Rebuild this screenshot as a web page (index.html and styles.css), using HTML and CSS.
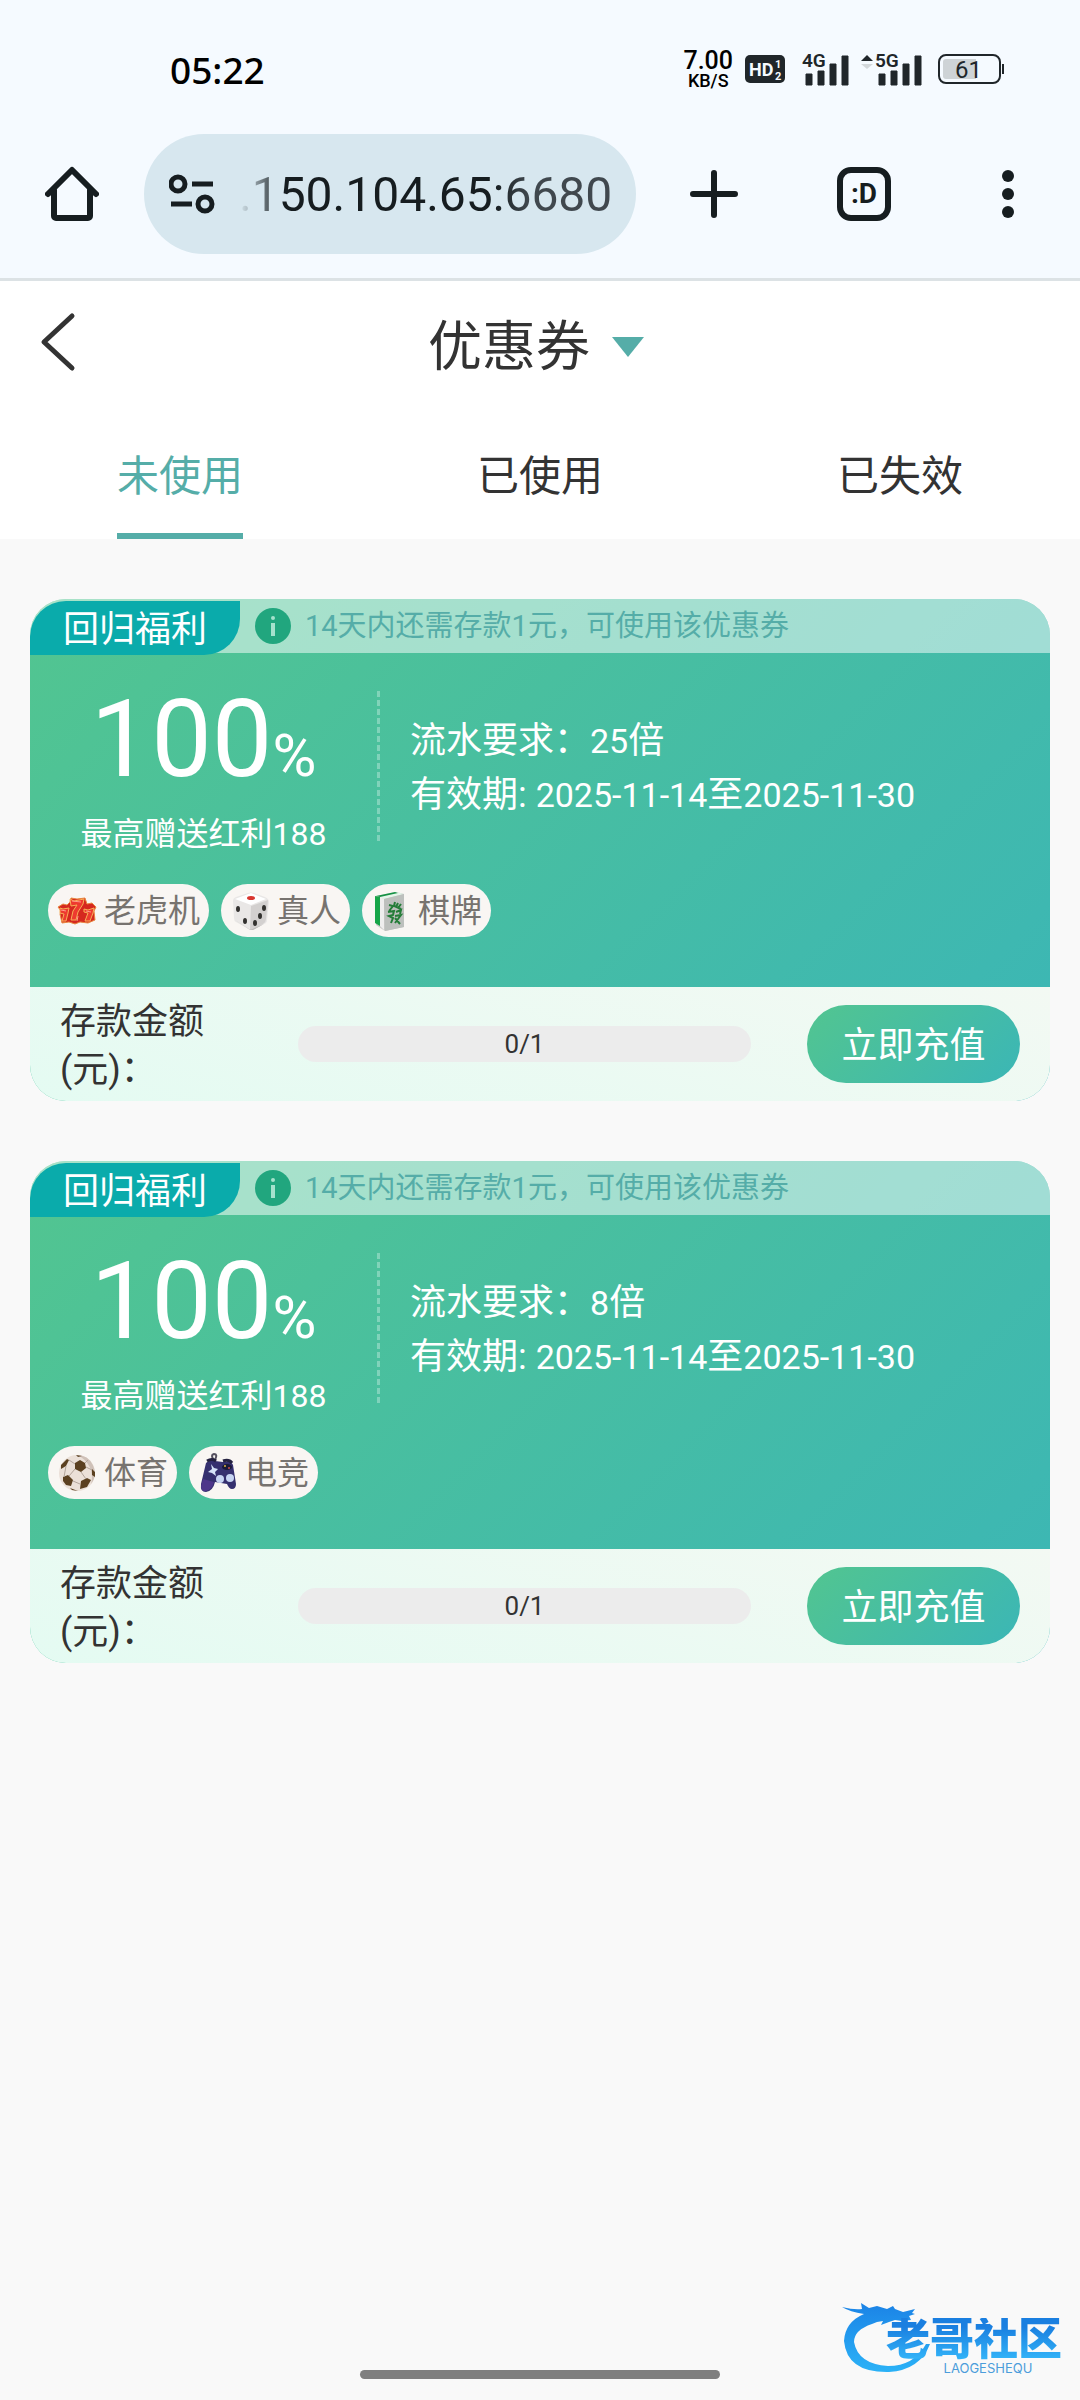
FILE: index.html
```html
<!DOCTYPE html>
<html lang="zh-CN">

<head>
    <meta charset="UTF-8">
    <meta name="viewport" content="width=device-width, initial-scale=1.0">
    <title>优惠券</title>
    <link rel="stylesheet" href="styles.css">
</head>

<body>
    <header class="browser">
        <div class="status_bar">
            <span class="status_time">05:22</span>
            <div class="status_icons">
                <div class="net_speed"><b>7.00</b><span>KB/S</span></div>
                <svg class="hd_icon" width="40" height="28" viewBox="0 0 40 28">
                    <rect width="40" height="28" rx="5" fill="#20262a" />
                    <text x="4" y="21" font-size="18" font-weight="700" fill="#f5faff">HD</text>
                    <text x="30" y="13" font-size="11" font-weight="700" fill="#f5faff">1</text>
                    <text x="30" y="25" font-size="11" font-weight="700" fill="#f5faff">2</text>
                </svg>
                <svg class="signal_4g" width="47" height="42" viewBox="0 -4 47 42">
                    <text x="0" y="15" font-size="19" font-weight="600">4G</text>
                    <path d="M4 22h6v11H4zM16 19h6v14h-6zM28 12h6v21h-6zM40 4h6v29h-6z" stroke="#20262a" stroke-linejoin="round" />
                </svg>
                <svg class="signal_5g" width="61" height="42" viewBox="0 -4 61 42">
                    <path d="M0 9l6-6 6 6z" />
                    <path d="M0 12l6 5 6-5z" fill="#d3d8db" />
                    <text x="14" y="15" font-size="19" font-weight="600">5G</text>
                    <path d="M18 22h6v11h-6zM30 19h6v14h-6zM42 12h6v21h-6zM54 4h6v29h-6z" stroke="#20262a" stroke-linejoin="round" />
                </svg>
                <svg width="67" height="30" viewBox="0 0 67 30">
                    <rect x="1" y="1" width="61" height="28" rx="7" fill="none" stroke="#20262a" stroke-width="2" />
                    <path d="M8 5h30v20H8a3 3 0 0 1-3-3V8a3 3 0 0 1 3-3z" fill="#ced3d6" />
                    <path d="M64 10h2v10h-2z" />
                    <text x="17" y="24" font-size="24">61</text>
                </svg>
            </div>
        </div>
        <div class="toolbar">
            <button class="tool tool_home" aria-label="主页">
                <svg width="54" height="56" viewBox="0 0 54 56" fill="none" stroke="#161d20" stroke-width="6" stroke-linejoin="round" stroke-linecap="round">
                    <path d="M3 28L27 4l24 24M9 24v26a2 2 0 0 0 2 2h32a2 2 0 0 0 2-2V24" />
                </svg>
            </button>
            <div class="url_box">
                <svg width="46" height="40" viewBox="0 0 46 40" fill="none" stroke="#161d20" stroke-width="5">
                    <circle cx="9" cy="10" r="7" />
                    <path d="M23 10h21M2 30h21" />
                    <circle cx="36" cy="30" r="7" />
                </svg>
                <input class="url_input" type="text" value=".150.104.65:6680" aria-label="网址">
            </div>
            <button class="tool tool_add" aria-label="新标签页">
                <svg width="48" height="48" viewBox="0 0 48 48" fill="none" stroke="#161d20" stroke-width="6" stroke-linecap="round">
                    <path d="M24 3v42M3 24h42" />
                </svg>
            </button>
            <button class="tool tool_tabs" aria-label="标签页"><span class="tab_count">:D</span></button>
            <button class="tool tool_menu" aria-label="菜单">
                <svg width="12" height="50" viewBox="0 0 12 50" fill="#161d20">
                    <circle cx="6" cy="7" r="6" />
                    <circle cx="6" cy="25" r="6" />
                    <circle cx="6" cy="43" r="6" />
                </svg>
            </button>
        </div>
    </header>

    <nav class="page_head">
        <div class="title_bar">
            <a class="back" href="#" aria-label="返回">
                <svg width="36" height="60" viewBox="0 0 36 60" fill="none" stroke="#333" stroke-width="5" stroke-linecap="round" stroke-linejoin="round">
                    <path d="M32 4L4 30l28 26" />
                </svg>
            </a>
            <button class="title">优惠券<i class="arrow_down"></i></button>
        </div>
        <div class="tabs">
            <a class="tab active" href="#"><span>未使用</span></a>
            <a class="tab" href="#"><span>已使用</span></a>
            <a class="tab" href="#"><span>已失效</span></a>
        </div>
    </nav>

    <main class="coupon_list">
        <section class="coupon">
            <div class="coupon_tip">
                <span class="badge">回归福利</span>
                <svg class="info" width="36" height="36" viewBox="0 0 36 36">
                    <circle cx="18" cy="18" r="18" fill="#21a67e" />
                    <circle cx="18" cy="10" r="2" fill="#a5e2cd" />
                    <path d="M18 15v13" stroke="#a5e2cd" stroke-width="4" />
                </svg>
                <span>14天内还需存款1元，可使用该优惠券</span>
            </div>
            <div class="coupon_body">
                <div class="coupon_main">
                    <div class="amount">
                        <div class="percent">100<small>%</small></div>
                        <div class="max_bonus">最高赠送红利188</div>
                    </div>
                    <div class="divider"></div>
                    <div class="rules">
                        <div>流水要求：<span class="num">25</span>倍</div>
                        <div>有效期: <span class="num">2025-11-14</span>至<span class="num">2025-11-30</span></div>
                    </div>
                </div>
                <div class="tags">
                    <span class="tag">
                        <svg width="40" height="40" viewBox="0 0 40 40" stroke-linejoin="round">
                            <path d="M1 16l5-3 4 1 3-3 1-4 6 1 8-1 2 6 5-1 4 4-2 4 1 9-7 3-8-1-5 2-6-2-7 1-2-9 1-3z" fill="#d5281f" stroke="#e9873f" />
                            <path d="M13 8l4 2 10-2-1 5-5 8-2 8h-5l2-9 4-6-6 1zM3 17l3 1 6-1-1 5-2 8H5l2-7-4-1zM27 18l4 1 6-2-1 5-3 8h-5l3-8-4-1z" fill="#ee3a2f" stroke="#f7b057" />
                            <path d="M15 10l9 1M4 19l5 1M29 20l5 1M20 30l1-5" stroke="#ff9a8a" fill="none" />
                        </svg>
                        老虎机
                    </span>
                    <span class="tag">
                        <svg width="40" height="40" viewBox="0 0 40 40">
                            <path d="M3 10Q3 7 6 6L18 2q3-1 6 0l11 4q4 2 4 5l-2 18q0 3-3 4l-9 5q-3 2-6 0L6 31q-2-1-2-4z" fill="#e9e7e6" />
                            <path d="M21 15l17-6-2 19q0 3-3 5l-9 5-4 1z" fill="#d3d0cf" />
                            <path d="M5 29l15 10 14-6-9 5q-3 2-6 0z" fill="#bcb9b7" />
                            <path d="M5 8L21 2l15 6-15 6z" fill="#fff" />
                            <ellipse cx="21" cy="7" rx="4" ry="2" fill="#d9362f" />
                            <g fill="#33312f">
                                <ellipse cx="8" cy="18" rx="2" ry="3" />
                                <ellipse cx="15" cy="30" rx="2" ry="3" />
                                <ellipse cx="34" cy="17" rx="2" ry="3" />
                                <ellipse cx="30" cy="25" rx="2" ry="3" />
                                <ellipse cx="25" cy="32" rx="2" ry="3" />
                            </g>
                        </svg>
                        真人
                    </span>
                    <span class="tag">
                        <svg width="40" height="40" viewBox="0 0 40 40">
                            <path d="M5 5l20-4 8 2v33l-19 4-9-6z" fill="#c9c9c7" />
                            <path d="M5 5l20-4 8 2-20 5z" fill="#e4f5e9" />
                            <path d="M4 5l5 1v29l-5-3z" fill="#17a548" />
                            <path d="M5 5l19-4 3 1L9 6z" fill="#169044" />
                            <path d="M9 6l4 2v31l-4-4z" fill="#efeeee" />
                            <path d="M13 8l20-5v33l-19 4z" fill="#bdc0bd" />
                            <path d="M18 14l4 1-4 5m6-9l-1 4 7 3m-3-6l-2 4m5-3l-3 4M17 21l6-1-1 4-4 1 4 2-2 5m5-11l5-2-1 4m-5 2l6-1-6 8m0-5l5 6" fill="none" stroke="#257d38" stroke-width="2" />
                        </svg>
                        棋牌
                    </span>
                </div>
            </div>
            <div class="coupon_foot">
                <label class="deposit_label" for="deposit_1">存款金额(元)：</label>
                <div class="deposit_bar">
                    <progress id="deposit_1" value="0" max="1"></progress>
                    <span class="deposit_value">0/1</span>
                </div>
                <button class="recharge">立即充值</button>
            </div>
        </section>

        <section class="coupon">
            <div class="coupon_tip">
                <span class="badge">回归福利</span>
                <svg class="info" width="36" height="36" viewBox="0 0 36 36">
                    <circle cx="18" cy="18" r="18" fill="#21a67e" />
                    <circle cx="18" cy="10" r="2" fill="#a5e2cd" />
                    <path d="M18 15v13" stroke="#a5e2cd" stroke-width="4" />
                </svg>
                <span>14天内还需存款1元，可使用该优惠券</span>
            </div>
            <div class="coupon_body">
                <div class="coupon_main">
                    <div class="amount">
                        <div class="percent">100<small>%</small></div>
                        <div class="max_bonus">最高赠送红利188</div>
                    </div>
                    <div class="divider"></div>
                    <div class="rules">
                        <div>流水要求：<span class="num">8</span>倍</div>
                        <div>有效期: <span class="num">2025-11-14</span>至<span class="num">2025-11-30</span></div>
                    </div>
                </div>
                <div class="tags">
                    <span class="tag">
                        <svg width="40" height="40" viewBox="0 0 40 40">
                            <circle cx="20" cy="20" r="18" fill="#ebe0d8" />
                            <path d="M20 2a18 18 0 0 1 14 29A24 24 0 0 0 20 2z" fill="#cfc1b8" />
                            <g fill="#5b4020">
                                <path d="M18 10l5-3 5 3 1 5-5 4-6-3z" />
                                <path d="M6 24l5-2 5 5-2 6-5-1-3-4z" />
                                <path d="M24 28l6-3 4 2-4 7-7 2z" />
                                <path d="M4 12l6-6 2 1-3 6-5 3z" />
                                <path d="M35 16l3 3v5l-3-2zM13 35l8 3-6-1zM19 2l6 1-4 1z" />
                            </g>
                            <path d="M12 7l6 4M9 13l-2 11M18 16l-6 7M16 28l7 3M24 19l5 7M29 14l6 3M28 10l3-3" fill="none" stroke="#b3a59b" />
                        </svg>
                        体育
                    </span>
                    <span class="tag">
                        <svg width="40" height="40" viewBox="0 0 40 40">
                            <path d="M16 7q-4-5 0-6 4 0 1 6" fill="none" stroke="#55505f" stroke-width="2" />
                            <path d="M8 10q4-4 9-2l8 1q8-2 10 3l3 19q0 5-4 5-3 0-5-5l-12-2q-2 9-9 10-6 0-5-8z" fill="#35306f" />
                            <path d="M5 26l-2 7q0 6 5 5 6-1 8-9z" fill="#4e368a" />
                            <path d="M9 8q5-3 9 0M25 8q6-2 9 2" stroke="#24213f" stroke-width="3" fill="none" />
                            <path d="M13 11l3 4 4 1-3 3 1 4-4-3-4-1 4-3z" fill="#d5e3f8" />
                            <ellipse cx="29" cy="14" rx="5" ry="3" fill="#1b1937" />
                            <circle cx="27" cy="13" r="1" fill="#d9b341" />
                            <circle cx="31" cy="15" r="1" fill="#c94f4f" />
                            <circle cx="22" cy="26" r="4" fill="#c6d4f2" />
                            <circle cx="32" cy="25" r="4" fill="#c6d4f2" />
                        </svg>
                        电竞
                    </span>
                </div>
            </div>
            <div class="coupon_foot">
                <label class="deposit_label" for="deposit_2">存款金额(元)：</label>
                <div class="deposit_bar">
                    <progress id="deposit_2" value="0" max="1"></progress>
                    <span class="deposit_value">0/1</span>
                </div>
                <button class="recharge">立即充值</button>
            </div>
        </section>
    </main>

    <div class="site_logo">
        <svg class="dragon" width="90" height="72" viewBox="0 0 90 72">
            <defs>
                <linearGradient id="dragon_fill" x1="0" y1="0" x2="0" y2="1">
                    <stop offset="0" stop-color="#1b83e6" />
                    <stop offset="1" stop-color="#2bb2f7" />
                </linearGradient>
            </defs>
            <path d="M0 5q12 3 20 2l-1-6 8 5 8-2 10 3 6-3 2 3 8 3 12-3-3 4 3 1-6 2 2 4-9 1-7-1-6 2-8 3 2-4-6 1-5 2Q12 28 12 40q4 22 34 24 26 0 38-22h4Q78 68 47 70 5 71 2 39 3 20 22 12 8 10 0 5z" fill="url(#dragon_fill)" />
        </svg>
        <div class="logo_text">
            <strong>老哥社区</strong>
            <span>LAOGESHEQU</span>
        </div>
    </div>
    <div class="home_indicator"></div>
</body>

</html>
```
FILE: styles.css
```css
* {
    box-sizing: border-box;
}

body {
    margin: 0;
    min-height: 100vh;
    position: relative;
    background: #f9f9f9;
    color: #333;
    font-family: Roboto, "Noto Sans CJK SC", sans-serif;
    font-size: 36px;
}

button {
    border: none;
    padding: 0;
    background: none;
    color: inherit;
    font: inherit;
    cursor: pointer;
}

a {
    color: inherit;
    text-decoration: none;
}

svg {
    display: block;
    flex: none;
}

/* browser */
.browser {
    background: #f5faff;
    border-bottom: 3px solid #dce2e5;
}

.status_bar {
    display: flex;
    justify-content: space-between;
    height: 134px;
    padding: 4px 75px 0 170px;
    align-items: center;
}

.status_time {
    font-family: "Noto Sans", sans-serif;
    font-size: 37px;
    font-weight: 500;
    color: #000;
}

.status_icons {
    display: flex;
    align-items: center;
    gap: 16px;
    fill: #20262a;
    color: #000;
}

.net_speed {
    display: flex;
    flex-direction: column;
    align-items: center;
    margin-right: -4px;
    padding-top: 2px;
    font-size: 18px;
    line-height: 18px;
    font-weight: 500;
}

.net_speed b {
    font-size: 25px;
    line-height: 22px;
    font-weight: 500;
}

.signal_4g {
    margin: 0 -4px 0 1px;
}

.toolbar {
    display: flex;
    align-items: center;
    height: 144px;
    padding-bottom: 24px;
}

.tool {
    display: flex;
    align-items: center;
    justify-content: center;
    width: 144px;
    height: 120px;
}

.tool_add {
    width: 156px;
}

.url_box {
    flex: 1;
    min-width: 0;
    display: flex;
    align-items: center;
    height: 120px;
    padding: 0 20px 0 25px;
    border-radius: 60px;
    background: #d7e7ef;
}

.url_input {
    flex: 1;
    min-width: 0;
    margin-left: 24px;
    padding: 0;
    border: none;
    outline: none;
    font-family: Roboto, sans-serif;
    font-size: 48px;
    color: transparent;
    background: linear-gradient(to right, #d7e7ef, #161d20 44px, #161d20 254px, #40484e 290px);
    -webkit-background-clip: text;
    background-clip: text;
}

.tab_count {
    width: 54px;
    height: 54px;
    border: 6px solid #161d20;
    border-radius: 14px;
    color: #161d20;
    font-size: 28px;
    font-weight: 700;
    line-height: 42px;
    text-align: center;
}

/* page head */
.page_head {
    background: #fff;
}

.title_bar {
    display: grid;
    grid-template-columns: 120px 1fr 128px;
    align-items: center;
    height: 128px;
    padding-bottom: 6px;
}

.back {
    padding-left: 40px;
}

.title {
    display: flex;
    align-items: center;
    justify-content: center;
    gap: 22px;
    font-size: 54px;
}

.arrow_down {
    margin-top: 10px;
    border: 16px solid transparent;
    border-top: 20px solid #55ada8;
    border-bottom: 0;
}

.tabs {
    display: grid;
    grid-template-columns: repeat(3, 1fr);
    justify-items: center;
}

.tab span {
    display: block;
    height: 130px;
    border-bottom: 6px solid transparent;
    font-size: 42px;
    line-height: 136px;
}

.active span {
    color: #55ada8;
    border-color: #55ada8;
}

/* coupon */
.coupon_list {
    display: flex;
    flex-direction: column;
    gap: 60px;
    padding: 60px 30px;
}

.coupon {
    overflow: hidden;
    border-radius: 36px;
    background: linear-gradient(135deg, #52c590, #3bb6b6);
    color: #fff;
}

.coupon_tip {
    display: flex;
    align-items: center;
    height: 54px;
    background: rgba(255, 255, 255, 0.5);
    color: #55ada8;
    font-size: 29px;
    line-height: 50px;
}

.badge {
    align-self: flex-start;
    width: 210px;
    height: 54px;
    margin-top: 2px;
    border-radius: 36px 0;
    background: #0aabab;
    color: #fff;
    font-size: 36px;
    line-height: 58px;
    text-align: center;
}

.info {
    margin: 0 14px 0 15px;
}

.coupon_body {
    padding: 38px 18px 50px 0;
}

.coupon_main {
    display: flex;
    height: 167px;
}

.amount {
    width: 347px;
    text-align: center;
}

.percent {
    font-size: 108px;
    line-height: 96px;
}

.percent small {
    font-size: 60px;
    line-height: 1;
}

.max_bonus {
    margin-top: 23px;
    font-size: 32px;
    line-height: 48px;
}

.divider {
    width: 3px;
    height: 150px;
    margin-right: 30px;
    background: repeating-linear-gradient(rgba(255, 255, 255, 0.3) 0 6px, transparent 6px 9px);
}

.rules {
    padding-top: 23px;
    line-height: 54px;
}

.num {
    font-size: 34px;
}

.tags {
    display: flex;
    gap: 12px;
    margin: 26px 0 0 18px;
}

.tag {
    display: flex;
    align-items: center;
    gap: 7px;
    height: 53px;
    padding: 0 9px;
    border-radius: 27px;
    background: #f9f6f3;
    color: #77736f;
    font-size: 32px;
    line-height: 50px;
}

.coupon_foot {
    display: flex;
    align-items: center;
    min-height: 114px;
    padding: 0 30px;
    background: linear-gradient(15deg, #e4fbf2, #f3f9f3);
    color: #333;
}

.deposit_label {
    width: 150px;
    margin-right: 88px;
    padding-top: 4px;
    line-height: 48px;
}

.deposit_bar {
    flex: 1;
    position: relative;
    margin-right: 56px;
}

progress {
    display: block;
    width: 100%;
    height: 36px;
    border: none;
    border-radius: 18px;
    overflow: hidden;
    -webkit-appearance: none;
    appearance: none;
    background: #ececec;
}

progress::-webkit-progress-bar {
    background: #ececec;
}

progress::-webkit-progress-value {
    background: #52c590;
}

.deposit_value {
    position: absolute;
    inset: 0;
    font-size: 26px;
    line-height: 36px;
    text-align: center;
}

.recharge {
    width: 213px;
    height: 78px;
    padding-bottom: 4px;
    border-radius: 39px;
    background: linear-gradient(135deg, #52c590, #3bb6b6);
    color: #fff;
}

/* floating */
.site_logo {
    position: absolute;
    right: 18px;
    bottom: 26px;
    display: flex;
    align-items: flex-end;
}

.logo_text {
    display: flex;
    flex-direction: column;
    align-items: center;
    margin-left: -46px;
}

.logo_text strong {
    font-size: 44px;
    font-weight: 900;
    line-height: 44px;
    color: transparent;
    background: linear-gradient(#1a7fe0 20%, #35b8fa);
    -webkit-background-clip: text;
    background-clip: text;
}

.logo_text span {
    margin-left: 28px;
    color: #4c9ddb;
    font-family: Inter, sans-serif;
    font-size: 13px;
    line-height: 12px;
}

.home_indicator {
    position: absolute;
    left: 50%;
    bottom: 21px;
    width: 360px;
    height: 9px;
    margin-left: -180px;
    border-radius: 5px;
    background: #7f7f7f;
}
```
